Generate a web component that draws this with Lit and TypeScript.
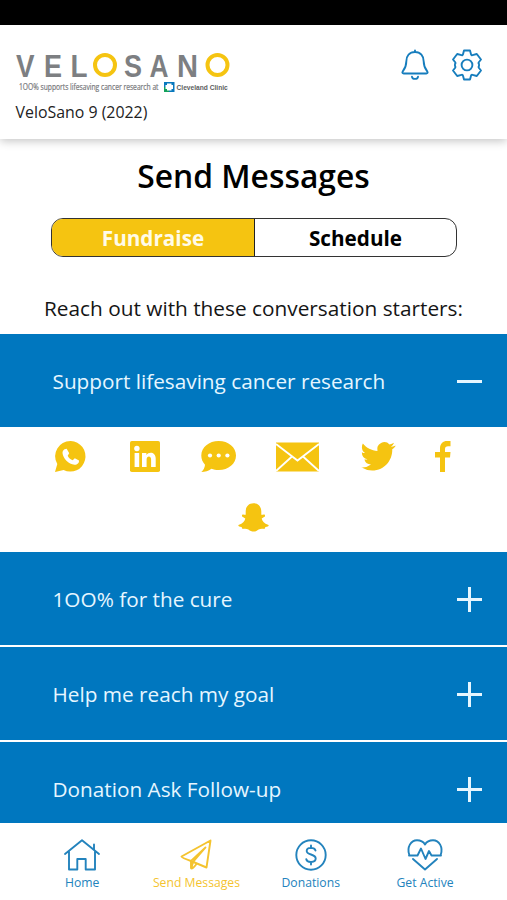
import { LitElement, html, css, svg } from "lit";
import { customElement, property } from "lit/decorators.js";

const icons: Record<string, { w: number; h: number; art: unknown }> = {
  bell: {
    w: 28, h: 32,
    art: svg`<path class="line" d="M14 1.500V3M14 3C8.500 3 5.300 7 5.300 12.500C5.300 18 4 19.500 1.700 22.500C1 23.500 1.500 24.500 2.700 24.500H25.300C26.500 24.500 27 23.500 26.300 22.500C24 19.500 22.700 18 22.700 12.500C22.700 7 19.500 3 14 3ZM11 27.800C11.500 30.600 16.500 30.600 17 27.800"/>`,
  },
  gear: {
    w: 32, h: 32,
    art: svg`<path class="line" d="M13 1.500H19L20 5.300Q20.300 6.500 21.500 6.200L25.800 5L30 10.500L28 13Q27 14.200 28 15L28 17Q27 18 28 19L30 21.500L25.800 27L21.500 25.800Q20.300 25.500 20 26.700L19 30.500H13L12 26.700Q11.700 25.500 10.500 25.800L6.200 27L2 21.500L4 19Q5 18 4 17L4 15Q5 14.200 4 13L2 10.500L6.200 5L10.500 6.200Q11.700 6.500 12 5.300Z"/><circle class="line" cx="16" cy="16" r="5.400"/>`,
  },
  whatsapp: {
    w: 31, h: 31,
    art: svg`<path d="M15.800 0A15 15.300 0 1 1 8.600 28.900L0 31L2.300 23A15.300 15.300 0 0 1 15.800 0Z"/><path fill="#fff" d="M9.500 8.300L11.700 7.800L14.200 12.300L12.700 14.700C13.500 17 15.500 18.500 17.700 19.200L19.800 17.300L24 19.500C24.300 22 22 24 19.500 23.800C13.500 23 8 17.500 7.500 12C7.500 10.500 8.300 9 9.500 8.300Z"/>`,
  },
  linkedin: {
    w: 30, h: 31,
    art: svg`<rect width="30" height="31" rx="1.800"/><g fill="#fff"><circle cx="6.900" cy="7.500" r="2.700"/><path d="M4.600 12H9.200V26H4.600ZM12 12H16.400V14C19 10.200 25.700 11 25.700 17.500V26H21.100V18.500C21.100 14.500 16.600 14.700 16.600 18.500V26H12Z"/></g>`,
  },
  sms: {
    w: 35, h: 31,
    art: svg`<path d="M17.700 0C27.500 0 35 6.300 35 14.500S27.500 29 17.700 29C15 29 12.600 28.500 10.400 27.700C7.500 30 4 31 .3 31C2.500 29 3.800 26.500 4 23.700C1.500 21 .3 18 .3 14.500C.3 6.300 8 0 17.700 0Z"/><g fill="#fff"><circle cx="9" cy="14.500" r="2.100"/><circle cx="17.700" cy="14.500" r="2.100"/><circle cx="26.400" cy="14.500" r="2.100"/></g>`,
  },
  mail: {
    w: 43, h: 30,
    art: svg`<rect y=".5" width="43" height="29"/><path fill="none" stroke="#fff" stroke-width="1.800" d="M0 2L21.500 18.500L43 2M0 29L16 14.500M43 29L27 14.500"/>`,
  },
  twitter: {
    w: 34, h: 29,
    art: svg`<path transform="translate(-.5 -3) scale(1.440 1.450)" d="M23.950 4.570a10 10 0 0 1-2.820.77 4.960 4.960 0 0 0 2.160-2.720c-.95.550-2 .950-3.130 1.180a4.920 4.920 0 0 0-8.380 4.480C7.690 8.090 4.070 6.130 1.640 3.160a4.820 4.820 0 0 0-.67 2.480c0 1.710.87 3.210 2.190 4.100a4.900 4.900 0 0 1-2.230-.62v.06a4.920 4.920 0 0 0 3.950 4.830 5 5 0 0 1-2.210.08 4.940 4.940 0 0 0 4.600 3.420A9.870 9.870 0 0 1 .5 19.540a13.990 13.990 0 0 0 7.550 2.210c9.050 0 14-7.500 14-13.980 0-.21 0-.42-.02-.63a9.940 9.940 0 0 0 2.460-2.550z"/>`,
  },
  facebook: {
    w: 16, h: 31,
    art: svg`<path d="M5 31V16.500H0V11H5V7.500C5 2.500 8 0 12 0H15.500V5.200H13C11 5.200 10 6 10 8V11H15.500L15 16.500H10V31Z"/>`,
  },
  snapchat: {
    w: 31, h: 29,
    art: svg`<path d="M15.500.3C20.500.3 23.300 4 23.300 8.500V11.700C24.500 11.900 25.500 11.200 26.500 11.600C27.500 12.500 27 13.600 25.700 14.300L23.700 15.500C24.200 18.500 26.500 20.700 30 21.800C31.500 22.500 30.500 23.800 27.200 24.200L26.500 25.900C24.500 25.700 22.200 25.500 20.600 26.500C17.200 29.300 13.800 29.300 10.400 26.500C8.800 25.500 6.500 25.700 4.500 25.900L3.800 24.200C.5 23.800-.5 22.500 1 21.800C4.500 20.700 6.800 18.500 7.300 15.500L5.300 14.300C4 13.600 3.500 12.500 4.500 11.600C5.500 11.200 6.500 11.900 7.700 11.700V8.500C7.700 4 10.500.3 15.500.3Z"/>`,
  },
  home: {
    w: 36, h: 32,
    art: svg`<path class="line" d="M1 15L18 1.300L35 15M5 12.500V30.500H13.300V20H21.700V30.500H31V12.500M30 10.500V5.500"/>`,
  },
  plane: {
    w: 32, h: 32,
    art: svg`<path class="line" d="M30.500 1.500L1.500 17.500Q2 19 11 22L26.500 28.500ZM11 22V29Q12 31 16.500 25M11.500 29L13 23L25.500 8.500L11 22"/>`,
  },
  dollar: {
    w: 32, h: 32,
    art: svg`<circle class="line" cx="16" cy="16" r="14.700"/><path class="line" d="M20.500 11.500C19.500 8 11.700 7.800 11.700 12C11.700 16.500 20.700 14.500 20.700 19.500C20.700 24 12 24 11.300 20.300M16 6.500V9M16 23V25.500"/>`,
  },
  heart: {
    w: 36, h: 32,
    art: svg`<path class="line" d="M2 16.500H10.500L14 9.500L18.500 20L22 12L24.500 16.500H34M2.300 16C-.5 8 4 1.300 10 1.300C13.500 1.300 16.500 3 18 5.500C19.500 3 22.500 1.300 26 1.300C32 1.300 36.500 8 33.700 16M6 20L18 30.500L30 20"/>`,
  },
};

@customElement("ui-icon")
class UiIcon extends LitElement {
  @property() name = "";
  static styles = css`
    :host { display: block; flex: none; }
    svg { display: block; fill: currentColor; overflow: visible; }
    .line { fill: none; stroke: currentColor; stroke-width: 1.9; stroke-linecap: round; stroke-linejoin: round; }
  `;
  render() {
    const i = icons[this.name];
    return html`<svg width=${i.w} height=${i.h} viewBox="0 0 ${i.w} ${i.h}">${i.art}</svg>`;
  }
}

@customElement("velo-logo")
class VeloLogo extends LitElement {
  static styles = css`
    :host { display: block; }
    svg { display: block; overflow: visible; }
    .word { font: 700 32px "Liberation Sans", sans-serif; fill: #7d7f82; }
    .tag { font: 400 8.500px "Open Sans", sans-serif; fill: #77787b; stroke: #77787b; stroke-width: .2; }
    .clinic { font: 700 8px "Liberation Sans", sans-serif; fill: #5c5e61; }
  `;
  render() {
    const letters: [string, number, number][] = [["V", 0, 18.5], ["E", 28, 18], ["L", 54.5, 17], ["S", 108, 18], ["A", 133.5, 19], ["N", 161, 21]];
    return html`<svg width="215" height="42" viewBox="0 0 215 42">
      ${letters.map(([c, x, w]) => svg`<text class="word" x=${x} y="25.500" textLength=${w} lengthAdjust="spacingAndGlyphs">${c}</text>`)}
      <g fill="none" stroke="#f5c411" stroke-width="4">
        <circle cx="89" cy="14" r="10"/><circle cx="201.500" cy="14" r="10"/>
      </g>
      <text class="tag" transform="translate(3 38.500) scale(.79 1)">1OO% supports lifesaving cancer research at</text>
      <rect x="148" y="31" width="10.500" height="10" fill="#0878bd"/>
      <path d="M148 36H153V41H148Z" fill="#13a15b"/>
      <path d="M151 32.500H155.500V34H157V38H155.500V39.500H151V38H149.500V34H151Z" fill="#fff"/>
      <text class="clinic" transform="translate(160.500 38.800) scale(.83 1)">Cleveland Clinic</text>
    </svg>`;
  }
}

@customElement("app-root")
class AppRoot extends LitElement {
  static styles = css`
    :host { display: flex; flex-direction: column; width: 507px; height: 900px; overflow: hidden; background: #fff; color: #000; font-family: "Open Sans", "Noto Sans", sans-serif; }
    .status { height: 25px; background: #000; flex: none; }
    header { height: 114px; flex: none; box-sizing: border-box; padding: 26px 24px 0 15.500px; display: flex; justify-content: space-between; box-shadow: 0 2px 9px rgba(0,0,0,.24); color: #167dbd; }
    .event { margin-top: 8px; font-size: 15.900px; line-height: 22px; color: #222; white-space: nowrap; }
    .tools { display: flex; gap: 22px; }
    .tools ui-icon { margin-top: -2px; }
    h1 { margin: 13px 0 0; text-align: center; font-size: 31.800px; font-weight: 600; line-height: 48px; flex: none; }
    .tabs { margin: 18px 50px 0 51px; height: 39px; box-sizing: border-box; border: 1.500px solid #333; border-radius: 12px; overflow: hidden; display: grid; grid-template-columns: 203px 1fr; text-align: center; font-size: 20.700px; line-height: 38px; font-weight: 700; flex: none; }
    .on { background: #f5c411; color: #fffbe8; border-right: 1px solid #222; }
    .lead { margin: 36px 0 0; height: 41px; line-height: 30px; text-align: center; font-size: 20.800px; white-space: nowrap; flex: none; color: #151515; }
    .row { height: 93px; flex: none; box-sizing: border-box; background: #0077bf; color: #e6f6ff; display: flex; align-items: center; justify-content: space-between; padding: 2px 25px 0 52.500px; font-size: 20.750px; line-height: 28px; }
    .row span { margin-top: -1px; }
    .row + .row { margin-top: 2px; }
    .sign { width: 25px; height: 25px; display: grid; place-items: center; }
    .sign::before, .plus::after { content: ""; grid-area: 1 / 1; width: 25px; height: 2.500px; background: #e6f6ff; }
    .plus::after { width: 2.500px; height: 25px; }
    .share { height: 125px; flex: none; box-sizing: border-box; padding: 14px 55px 0; color: #f5c411; display: flex; flex-direction: column; align-items: center; gap: 31px; }
    .channels { width: 100%; display: flex; gap: 40.250px; align-items: center; }
    .channels ui-icon:nth-child(2) { margin-left: 4px; }
    .channels ui-icon:nth-child(5) { margin-left: 1.500px; }
    nav { height: 77px; flex: none; background: #fff; display: grid; grid-template-columns: repeat(4, 114.300px); padding-left: 25px; color: #2383bd; }
    .item { display: flex; flex-direction: column; align-items: center; padding-top: 16px; font-size: 12.200px; line-height: 18px; gap: 3px; white-space: nowrap; }
    .active { color: #f4c32e; }
    .list { flex: 1; min-height: 0; overflow: hidden; display: flex; flex-direction: column; }
  `;
  render() {
    const row = (t: string, open = false) => html`<div class="row"><span>${t}</span><i class="sign ${open ? "" : "plus"}"></i></div>`;
    const item = (n: string, t: string, on = false) => html`<div class="item ${on ? "active" : ""}"><ui-icon name=${n}></ui-icon><span>${t}</span></div>`;
    return html`
      <div class="status"></div>
      <header>
        <div><velo-logo></velo-logo><div class="event">VeloSano 9 (2022)</div></div>
        <div class="tools"><ui-icon name="bell"></ui-icon><ui-icon name="gear"></ui-icon></div>
      </header>
      <h1>Send Messages</h1>
      <div class="tabs"><div class="on">Fundraise</div><div>Schedule</div></div>
      <p class="lead">Reach out with these conversation starters:</p>
      <div class="list">
        ${row("Support lifesaving cancer research", true)}
        <div class="share">
          <div class="channels">${["whatsapp", "linkedin", "sms", "mail", "twitter", "facebook"].map((n) => html`<ui-icon name=${n}></ui-icon>`)}</div>
          <ui-icon name="snapchat"></ui-icon>
        </div>
        ${row("1OO% for the cure")}${row("Help me reach my goal")}${row("Donation Ask Follow-up")}
      </div>
      <nav>${item("home", "Home")}${item("plane", "Send Messages", true)}${item("dollar", "Donations")}${item("heart", "Get Active")}</nav>
    `;
  }
}
